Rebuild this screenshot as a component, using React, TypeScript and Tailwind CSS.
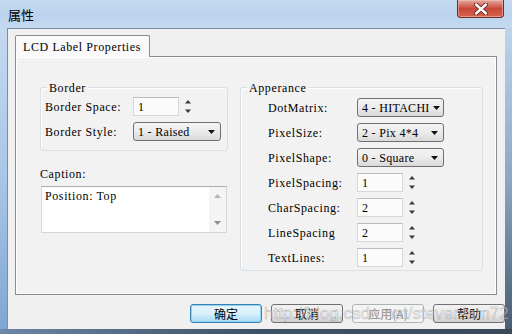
import React from "react";

const mono = "font-['Liberation_Serif','Times_New_Roman',serif] text-[12px] tracking-[0.6px] text-black leading-none";
const monoTight = "font-['Liberation_Serif','Times_New_Roman',serif] text-[12px] tracking-[0.3px] text-black leading-none";
const cjk = "font-['Noto_Sans_CJK_SC','Noto_Sans',sans-serif] text-[12px] text-black";

const SpinArrows = () => (
  <svg width="8" height="17" viewBox="0 0 8 17" className="shrink-0">
    <path d="M4 2 L7 5.5 L1 5.5 Z" fill="#3a3a3a" />
    <path d="M4 15 L7 11.5 L1 11.5 Z" fill="#3a3a3a" />
  </svg>
);

const Spin = ({ value }: { value: string }) => (
  <div className="flex items-center gap-[5px]">
    <div className={`w-[46px] h-[19px] bg-[#fbfbfb] border border-[#d6d6d6] border-t-[#b9bcc2] pl-[4px] pt-[3px] ${mono}`}>
      {value}
    </div>
    <SpinArrows />
  </div>
);

const Select = ({ value, w = 88 }: { value: string; w?: number }) => (
  <div
    className={`h-[19px] flex items-center justify-between pl-[4px] pr-[5px] rounded-[3px] border border-[#707070] bg-gradient-to-b from-[#f4f4f4] via-[#ebebeb] to-[#d9d9d9] ${monoTight}`}
    style={{ width: w }}
  >
    <span className="whitespace-pre">{value}</span>
    <svg width="7" height="4" viewBox="0 0 7 4" className="shrink-0 ml-[3px]">
      <path d="M0 0 H7 L3.5 4 Z" fill="#111" />
    </svg>
  </div>
);

const Group = ({ title, className, children }: { title: string; className: string; children: React.ReactNode }) => (
  <div className={`relative border border-[#d5dfe5] rounded-[3px] shadow-[inset_1px_1px_0_#ffffff] ${className}`}>
    <span className={`absolute -top-[6px] left-[6px] px-[2px] bg-[#f2f2f2] ${mono}`}>{title}</span>
    {children}
  </div>
);

const Row = ({ label, labelW, children }: { label: string; labelW: number; children: React.ReactNode }) => (
  <div className="flex items-center h-[19px]">
    <span className={mono} style={{ width: labelW }}>{label}</span>
    {children}
  </div>
);

const Button = ({ label, variant }: { label: string; variant?: "default" | "disabled" }) => {
  const base = "w-[72px] h-[19px] rounded-[3px] flex items-center justify-center font-['Noto_Sans_CJK_SC','Noto_Sans',sans-serif] text-[12px]";
  if (variant === "default")
    return (
      <div className={`${base} border border-[#3c7fb1] bg-gradient-to-b from-[#eaf6fd] via-[#d9f0fc] to-[#a7d9f5] shadow-[inset_0_0_0_1px_#8fd4f5] text-black`}>
        {label}
      </div>
    );
  if (variant === "disabled")
    return (
      <div className={`${base} border border-[#adb2b5] bg-[#f4f4f4] text-[#8d8d8d]`}>{label}</div>
    );
  return (
    <div className={`${base} border border-[#707070] bg-gradient-to-b from-[#f2f2f2] via-[#ebebeb] to-[#cfcfcf] text-black`}>
      {label}
    </div>
  );
};

export default function App() {
  return (
    <div className="w-[512px] h-[334px] flex flex-col overflow-hidden bg-[#bcd3ec]">
      {/* title bar */}
      <div className="h-[28px] flex justify-between bg-gradient-to-b from-[#c5dbf2] via-[#bad2ec] to-[#c4daf1]">
        <span className={`pl-[8px] pt-[5px] ${cjk} text-[13px]`}>属性</span>
        <div className="mr-[8px] w-[47px] h-[18px] rounded-b-[4px] border border-t-0 border-[#6b2e2e] bg-gradient-to-b from-[#e2a99e] via-[#c9473a] to-[#d6634b] flex items-center justify-center shadow-[inset_0_0_0_1px_rgba(255,200,190,0.5)]">
          <svg width="14" height="12" viewBox="0 0 14 12">
            <path d="M2 1.5 L12 10.5 M12 1.5 L2 10.5" stroke="#5a1a14" strokeWidth="4" strokeLinecap="round" />
            <path d="M2 1.5 L12 10.5 M12 1.5 L2 10.5" stroke="#ffffff" strokeWidth="2.4" strokeLinecap="round" />
          </svg>
        </div>
      </div>

      <div className="flex flex-1">
        <div className="w-[7px] bg-gradient-to-b from-[#c3d9f0] via-[#a9c6e6] to-[#7fa6d2]" />

        {/* client area */}
        <div className="relative flex-1 flex flex-col bg-[#f0f0f0] border-t border-l border-[#7b8ea5] pl-[7px] pt-[6px]">
          {/* tab */}
          <div className="flex">
            <div className={`relative z-10 -mb-px w-[135px] h-[22px] bg-[#f9f9f9] border border-b-0 border-[#898c95] rounded-t-[2px] pl-[7px] pt-[5px] ${mono}`}>
              LCD Label Properties
            </div>
          </div>

          {/* panel */}
          <div className="w-[482px] h-[239px] bg-[#f2f2f2] border border-[#898c95] shadow-[inset_1px_1px_0_#ffffff,inset_-1px_-1px_0_#ffffff] flex pt-[30px]">
            {/* left column */}
            <div className="ml-[24px] w-[188px] flex flex-col">
              <Group title="Border" className="h-[64px] pt-[9px] pl-[4px] flex flex-col gap-[6px]">
                <Row label="Border Space:" labelW={88}>
                  <Spin value="1" />
                </Row>
                <Row label="Border Style:" labelW={88}>
                  <Select value="1 - Raised" />
                </Row>
              </Group>

              <span className={`mt-[17px] ${mono}`}>Caption:</span>
              <div className="mt-[6px] ml-px w-[186px] h-[47px] bg-white border border-[#d6d6d6] border-t-[#abadb3] flex">
                <span className={`flex-1 pl-[3px] pt-[3px] ${mono}`}>Position: Top</span>
                <div className="w-[17px] bg-[#f4f4f4] flex flex-col justify-between items-center py-[7px]">
                  <svg width="7" height="4" viewBox="0 0 7 4"><path d="M3.5 0 L7 4 H0 Z" fill="#b5b5b5" /></svg>
                  <svg width="7" height="4" viewBox="0 0 7 4"><path d="M0 0 H7 L3.5 4 Z" fill="#8f8f8f" /></svg>
                </div>
              </div>
            </div>

            {/* right column */}
            <div className="ml-[12px] w-[243px]">
              <Group title="Apperance" className="h-[184px] pt-[10px] pl-[27px] flex flex-col gap-[6px]">
                <Row label="DotMatrix:" labelW={89}>
                  <Select value="4 - HITACHI" w={87} />
                </Row>
                <Row label="PixelSize:" labelW={89}>
                  <Select value="2 - Pix 4*4" w={87} />
                </Row>
                <Row label="PixelShape:" labelW={89}>
                  <Select value="0 - Square" w={87} />
                </Row>
                <Row label="PixelSpacing:" labelW={89}>
                  <Spin value="1" />
                </Row>
                <Row label="CharSpacing:" labelW={89}>
                  <Spin value="2" />
                </Row>
                <Row label="LineSpacing" labelW={89}>
                  <Spin value="2" />
                </Row>
                <Row label="TextLines:" labelW={89}>
                  <Spin value="1" />
                </Row>
              </Group>
            </div>
          </div>

          {/* buttons */}
          <div className="mt-[9px] w-[490px] flex justify-end gap-[9px]">
            <Button label="确定" variant="default" />
            <Button label="取消" />
            <Button label="应用(A)" variant="disabled" />
            <Button label="帮助" />
          </div>

          <span className="absolute left-[256px] top-[272px] font-['Liberation_Sans',sans-serif] text-[17px] text-white/40 [-webkit-text-stroke:0.6px_rgba(110,110,110,0.45)] whitespace-nowrap pointer-events-none">
            http://blog.csdn.net/stevenlam72
          </span>
        </div>

        <div className="w-[7px] bg-gradient-to-b from-[#bcd4ee] via-[#8ea6c2] to-[#4a5d73]" />
      </div>

      <div className="h-[5px] bg-gradient-to-r from-[#6b86a6] via-[#3f5166] to-[#3a4a5c]" />
    </div>
  );
}
